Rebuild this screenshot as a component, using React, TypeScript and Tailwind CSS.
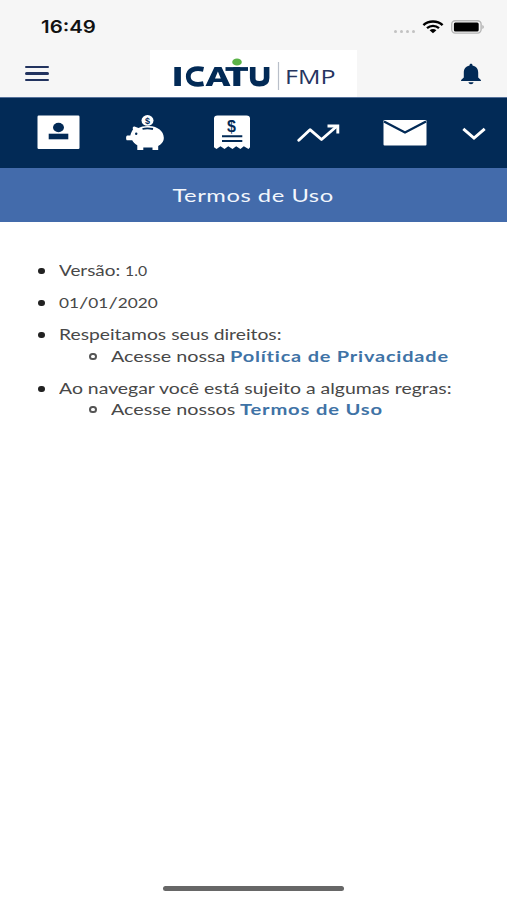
import type { ReactNode } from "react";

const NAVY = "#022a56";

function StatusBar() {
  return (
    <div className="flex h-[50px] items-start justify-between pl-[41px] pr-[23px] pt-[17px]">
      <span className="origin-left scale-x-[1.2] font-['Inter'] text-[17px] font-semibold leading-[21px] text-[#111]">
        16:49
      </span>
      <div className="flex items-center pt-[3px]">
        <div className="mr-[7px] mt-[9px] flex gap-[2.5px]">
          {[0, 1, 2, 3].map((i) => (
            <span key={i} className="h-[3px] w-[3.4px] rounded-full bg-[#c2c2c2]" />
          ))}
        </div>
        <svg width="22" height="14" viewBox="0 0 22 14" className="mr-[7px]" fill="none" stroke="#000">
          <path d="M1.4 5.1C6.6 0.4 15.4 0.4 20.6 5.1" strokeWidth="2.5" />
          <path d="M5 8.2C8.4 5.1 13.6 5.1 17 8.2" strokeWidth="2.3" />
          <path d="M7.6 10.3C9.6 8.7 12.4 8.7 14.4 10.3L11 13.3Z" fill="#000" stroke="none" />
        </svg>
        <svg width="33" height="14" viewBox="0 0 33 14">
          <rect x="0.7" y="0.7" width="29.4" height="12.4" rx="3.5" fill="none" stroke="#b5b5b5" strokeWidth="1.4" />
          <rect x="2.9" y="2.4" width="24.8" height="9" rx="1.5" fill="#000" />
          <path d="M31.400 5v4q1.400-.6 1.400-2t-1.400-2Z" fill="#aaa" />
        </svg>
      </div>
    </div>
  );
}

function Logo() {
  return (
    <div className="relative h-[47px] w-[207px] bg-white">
      <svg width="207" height="47" viewBox="0 0 207 47">
        <g fill="none" stroke={NAVY}>
          <path d="M27.600 17V36" strokeWidth="6.600" />
          <path d="M53.500 19.300C44.500 17.300 38.300 20 38.300 26.500S44.500 35.700 53.500 33.700" strokeWidth="4.800" />
          <path d="M75.500 19H98" strokeWidth="3.800" />
          <path d="M86.800 17V36" strokeWidth="7" />
          <path d="M102.700 17V28C102.700 32.300 105 33.800 109.500 33.800S116.600 32.300 116.600 28V17" strokeWidth="5.600" />
        </g>
        <path
          fill={NAVY}
          fillRule="evenodd"
          d="M55.500 36L64.500 17H71.500L80.500 36H73.700L72 32H63.700L62 36ZM65 28.500H70.800L67.900 21.600Z"
        />
        <ellipse cx="87" cy="12" rx="4.800" ry="3.600" fill="#5bb348" />
        <path d="M128.500 12V40" stroke="#b9bfc9" strokeWidth="1.200" />
      </svg>
      <span className="absolute left-[135px] top-[15px] origin-left scale-x-[1.25] font-['Open_Sans'] text-[20px] leading-[24px] text-[#26355f]">
        FMP
      </span>
    </div>
  );
}

function Header() {
  return (
    <div className="flex h-[47px] items-start justify-between pl-[25px] pr-[25px]">
      <div className="mt-[16px] flex w-[125px] flex-col gap-[4px]">
        <span className="h-[2.3px] w-[24px] rounded-full bg-[#22335f]" />
        <span className="h-[2.3px] w-[24px] rounded-full bg-[#22335f]" />
        <span className="h-[2.3px] w-[24px] rounded-full bg-[#22335f]" />
      </div>
      <Logo />
      <div className="flex w-[125px] justify-end">
        <svg width="22" height="22" viewBox="0 0 22 22" className="mt-[13px]" fill={NAVY}>
          <path d="M11 .8c1 0 1.500.6 1.500 1.700 4 .9 5.700 3.400 5.700 7v5l2.700 2.400v1.200H1.100v-1.200l2.700-2.400v-5c0-3.600 1.700-6.100 5.700-7C9.500 1.400 10 .8 11 .8Z" />
          <path d="M8.400 19.300h5.200c-.4 1.300-1.200 2-2.600 2s-2.200-.7-2.600-2Z" />
        </svg>
      </div>
    </div>
  );
}

function NavIcons() {
  return (
    <nav className="flex h-[71px] items-start border-t border-[#55719a] bg-[#022a56] pl-[37px] pt-[14px]">
      <svg width="43" height="40" viewBox="0 0 43 40">
        <rect x="0.5" y="3.5" width="42" height="33.5" rx="1.2" fill="#fff" />
        <ellipse cx="21.5" cy="15.5" rx="5.5" ry="4.7" fill={NAVY} />
        <rect x="11.7" y="21.7" width="19.6" height="5.6" fill={NAVY} />
      </svg>

      <svg width="40" height="40" viewBox="0 0 40 40" className="ml-[45px]">
        <ellipse cx="22.5" cy="8.4" rx="6" ry="5.3" fill="#fff" />
        <text x="22.5" y="11.7" textAnchor="middle" fontFamily="Liberation Sans" fontSize="9" fontWeight="bold" fill={NAVY}>$</text>
        <path
          fill="#fff"
          d="M8 17.400C7.300 15.400 8 14.300 9.500 14.500L13.500 16C16 14.500 20 13.700 24 14C33 14.500 38.500 19 38.800 25.500C39 29.500 36.500 32.200 33.200 34V38H27.500V35.400H18.300V38H12.300V33.300C10 32 8.300 30.500 7.200 28.300H2.300C.7 28.300.7 23.400 2.300 23.400H5.300C6 21 6.800 19.200 8 17.400Z"
        />
        <path d="M17.500 17C20 16.200 24.500 16.200 28 17" fill="none" stroke={NAVY} strokeWidth="1.8" />
        <circle cx="11.2" cy="21.8" r="1.2" fill={NAVY} />
      </svg>

      <svg width="38" height="40" viewBox="0 0 38 40" className="ml-[48px]">
        <path
          fill="#fff"
          d="M4.500 3.500H33.500Q37 3.500 37 6.500V35.200L35.500 37L30.800 34.300L27.400 37L23.200 34.300L19.500 37L15.300 34.300L11.500 37L7.500 34.300L3.500 37L1 35.200V6.500Q1 3.500 4.500 3.500Z"
        />
        <text x="18.5" y="19.5" textAnchor="middle" fontFamily="Liberation Sans" fontSize="16" fontWeight="bold" fill={NAVY}>$</text>
        <path d="M9 24.300H29.300M9 29H29.300" stroke={NAVY} strokeWidth="1.9" />
      </svg>

      <svg width="44" height="40" viewBox="0 0 44 40" className="ml-[46px]" fill="none" stroke="#fff" strokeWidth="2.9">
        <path d="M1.800 28.200L13 17.700L24.500 27.500L39.500 14.500" strokeLinecap="round" strokeLinejoin="round" />
        <path d="M30.500 14H40.800V21.500" />
      </svg>

      <svg width="44" height="40" viewBox="0 0 44 40" className="ml-[42px]">
        <rect x="0.5" y="8" width="43" height="25.5" rx="1" fill="#fff" />
        <path d="M1 9.500L22 20.500L43 9.500" fill="none" stroke={NAVY} strokeWidth="2.3" />
      </svg>

      <svg width="26" height="40" viewBox="0 0 26 40" className="ml-[34px]" fill="none" stroke="#fff" strokeWidth="2.9">
        <path d="M2.300 16.800L13 26L23.700 16.800" />
      </svg>
    </nav>
  );
}

// figures that sit at x-height
function Num({ children }: { children: ReactNode }) {
  return <span className="text-[12.5px] leading-none">{children}</span>;
}

function Content() {
  return (
    <main className="pt-[38px] pl-[38px] font-['Lato'] text-[15px] leading-[21.2px] text-[#484848]">
      <ul className="flex flex-col gap-[11px]">
        <Item>
          <p className="w-max origin-left scale-x-[1.26]">Versão: <Num>1.0</Num></p>
        </Item>
        <Item>
          <p className="w-max origin-left scale-x-[1.38]">
            <Num>01</Num>/<Num>01</Num>/<Num>2020</Num>
          </p>
        </Item>
        <Item>
          <p className="w-max origin-left scale-x-[1.285]">Respeitamos seus direitos:</p>
          <SubItem>
            <span className="w-[119px]">
              <span className="block w-max origin-left scale-x-[1.315]">Acesse nossa</span>
            </span>
            <a className="block origin-left scale-x-[1.33] font-bold tracking-[0.6px] text-[#3f73a6]">Política de Privacidade</a>
          </SubItem>
        </Item>
        <Item>
          <p className="w-max origin-left scale-x-[1.294]">Ao navegar você está sujeito a algumas regras:</p>
          <SubItem>
            <span className="w-[129px]">
              <span className="block w-max origin-left scale-x-[1.315]">Acesse nossos</span>
            </span>
            <a className="block origin-left scale-x-[1.345] font-bold tracking-[0.6px] text-[#3f73a6]">Termos de Uso</a>
          </SubItem>
        </Item>
      </ul>
    </main>
  );
}

function Item({ children }: { children: ReactNode }) {
  return (
    <li className="flex whitespace-nowrap">
      <span className="mr-[14px] mt-[8px] h-[6px] w-[7px] shrink-0 rounded-full bg-[#222]" />
      <div>{children}</div>
    </li>
  );
}

function SubItem({ children }: { children: ReactNode }) {
  return (
    <div className="flex pl-[30px]">
      <span className="mr-[14px] mt-[7px] h-[7px] w-[8px] shrink-0 rounded-full border-2 border-[#555]" />
      {children}
    </div>
  );
}

export default function App() {
  return (
    <div className="flex h-[900px] w-[507px] flex-col overflow-hidden bg-white">
      <header className="bg-[#f6f6f6]">
        <StatusBar />
        <Header />
      </header>
      <NavIcons />
      <div className="flex h-[54px] items-center justify-center bg-[#436bab] font-['Lato'] text-[18px] text-[#f2f6fc]">
        <h1 className="scale-x-[1.32] tracking-[0.4px]">Termos de Uso</h1>
      </div>
      <Content />
      <div className="mx-auto mb-[9px] mt-auto h-[5px] w-[181px] rounded-full bg-[#676767]" />
    </div>
  );
}
